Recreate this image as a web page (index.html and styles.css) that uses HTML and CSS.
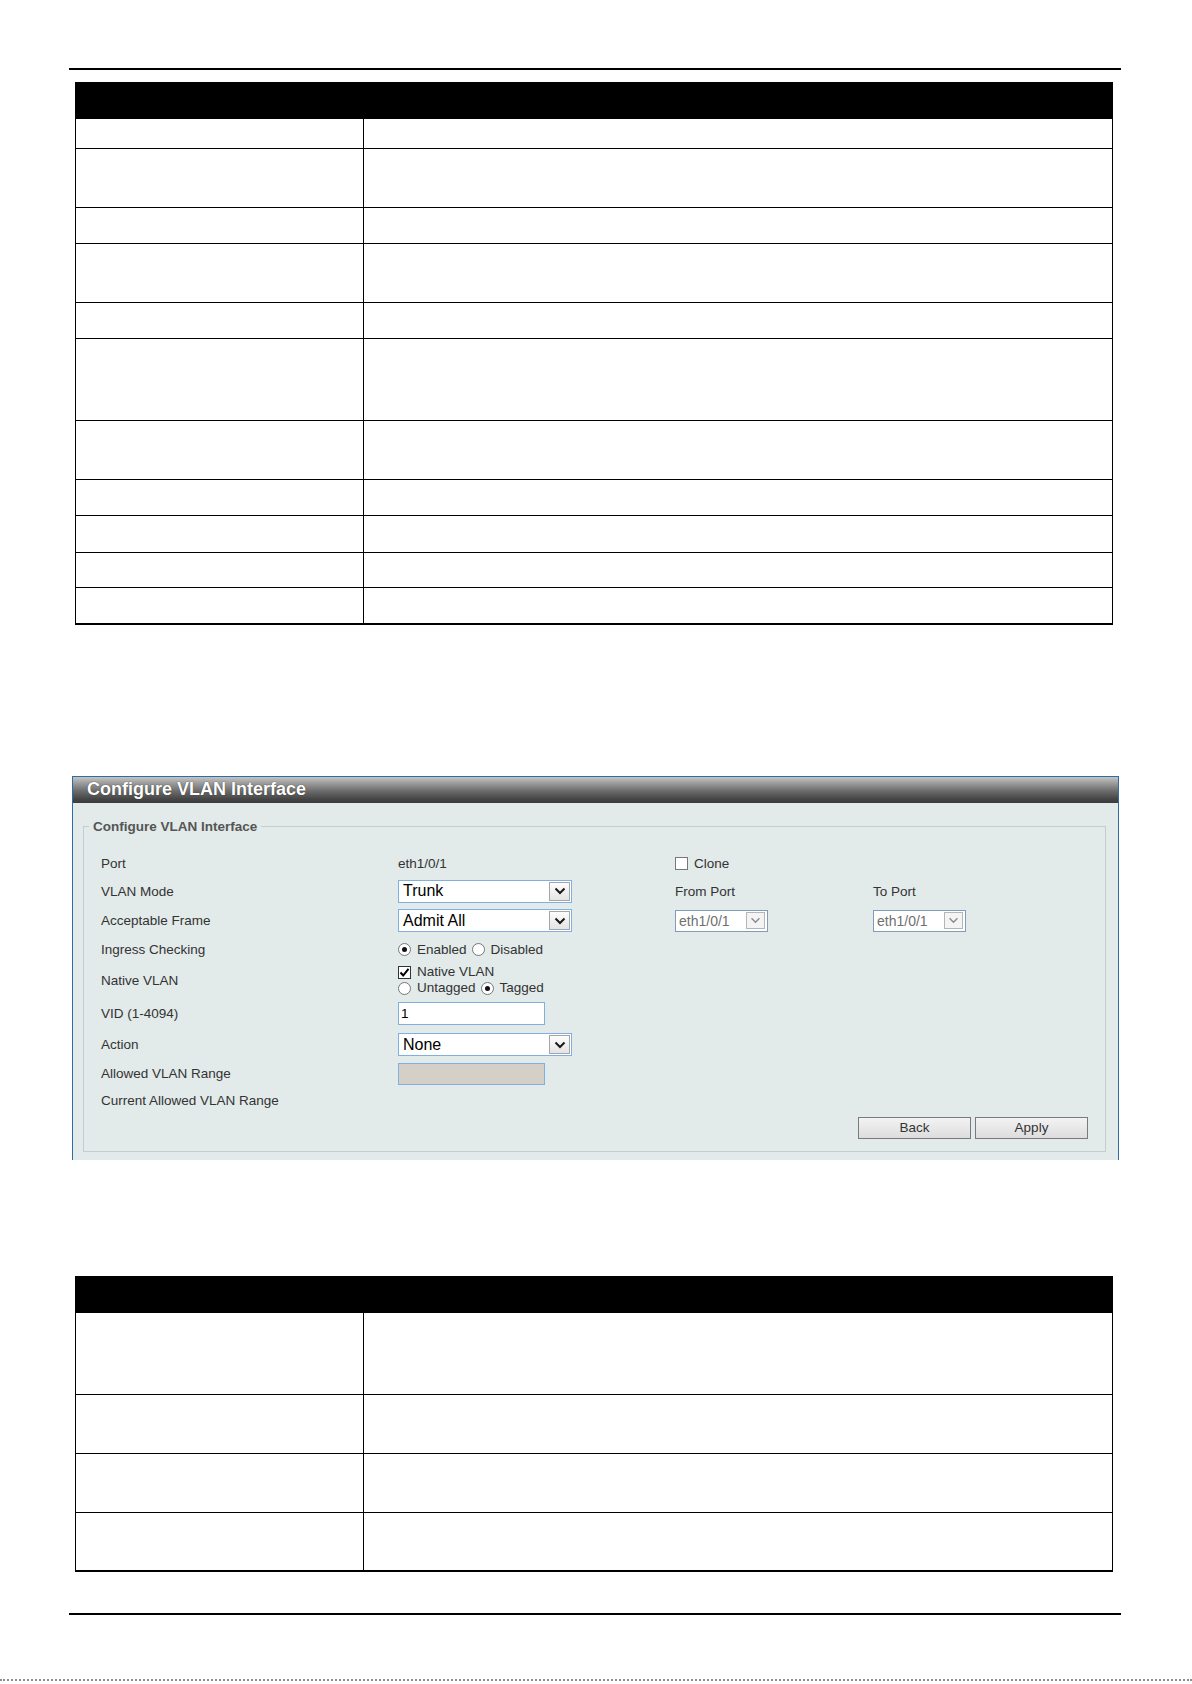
FILE: index.html
```html
<!DOCTYPE html>
<html lang="en">
<head>
  <meta charset="UTF-8">
  <title>Configure VLAN Interface</title>
  <link rel="stylesheet" href="styles.css">
</head>
<body>
  <div class="doc">
    <div class="rule"></div>

    <table class="param-table first">
      <tr class="head"><th></th><th></th></tr>
      <tr class="r-xs"><td></td><td></td></tr>
      <tr class="r-2"><td></td><td></td></tr>
      <tr class="r-1"><td></td><td></td></tr>
      <tr class="r-2"><td></td><td></td></tr>
      <tr class="r-1"><td></td><td></td></tr>
      <tr class="r-3"><td></td><td></td></tr>
      <tr class="r-2"><td></td><td></td></tr>
      <tr class="r-1"><td></td><td></td></tr>
      <tr class="r-1b"><td></td><td></td></tr>
      <tr class="r-1c"><td></td><td></td></tr>
      <tr class="r-1"><td></td><td></td></tr>
    </table>

    <div class="panel">
      <div class="panel-title">Configure VLAN Interface</div>
      <div class="panel-body">
        <fieldset class="group">
          <legend>Configure VLAN Interface</legend>
          <div class="form">

            <div class="form-row h-port">
              <span class="lbl">Port</span>
              <span class="val">eth1/0/1</span>
              <span class="opt"><span class="check"></span>Clone</span>
              <span></span>
            </div>

            <div class="form-row h-mode">
              <span class="lbl">VLAN Mode</span>
              <div class="select">
                <span class="select-text">Trunk</span>
                <span class="select-btn"><svg width="12" height="8" viewBox="0 0 12 8"><path d="M1.5 1.5 L6 6 L10.5 1.5" fill="none" stroke="#1a1a1a" stroke-width="2"/></svg></span>
              </div>
              <span class="lbl">From Port</span>
              <span class="lbl">To Port</span>
            </div>

            <div class="form-row h-frame">
              <span class="lbl">Acceptable Frame</span>
              <div class="select">
                <span class="select-text">Admit All</span>
                <span class="select-btn"><svg width="12" height="8" viewBox="0 0 12 8"><path d="M1.5 1.5 L6 6 L10.5 1.5" fill="none" stroke="#1a1a1a" stroke-width="2"/></svg></span>
              </div>
              <div class="select small disabled">
                <span class="select-text">eth1/0/1</span>
                <span class="select-btn"><svg width="11" height="7" viewBox="0 0 12 8"><path d="M1.5 1.5 L6 6 L10.5 1.5" fill="none" stroke="#8a8a8a" stroke-width="1.6"/></svg></span>
              </div>
              <div class="select small disabled">
                <span class="select-text">eth1/0/1</span>
                <span class="select-btn"><svg width="11" height="7" viewBox="0 0 12 8"><path d="M1.5 1.5 L6 6 L10.5 1.5" fill="none" stroke="#8a8a8a" stroke-width="1.6"/></svg></span>
              </div>
            </div>

            <div class="form-row h-ingress">
              <span class="lbl">Ingress Checking</span>
              <span class="radios">
                <span class="radio on"></span>Enabled
                <span class="radio"></span>Disabled
              </span>
              <span></span>
              <span></span>
            </div>

            <div class="form-row h-native">
              <span class="lbl">Native VLAN</span>
              <div class="stack">
                <span class="opt"><span class="check on"><svg width="11" height="11" viewBox="0 0 11 11"><path d="M1.5 5.5 L4.2 8.5 L9.5 1.8" fill="none" stroke="#000" stroke-width="2"/></svg></span>Native VLAN</span>
                <span class="radios">
                  <span class="radio"></span>Untagged
                  <span class="radio on"></span>Tagged
                </span>
              </div>
              <span></span>
              <span></span>
            </div>

            <div class="form-row h-vid">
              <span class="lbl">VID (1-4094)</span>
              <div class="input">1</div>
              <span></span>
              <span></span>
            </div>

            <div class="form-row h-action">
              <span class="lbl">Action</span>
              <div class="select">
                <span class="select-text">None</span>
                <span class="select-btn"><svg width="12" height="8" viewBox="0 0 12 8"><path d="M1.5 1.5 L6 6 L10.5 1.5" fill="none" stroke="#1a1a1a" stroke-width="2"/></svg></span>
              </div>
              <span></span>
              <span></span>
            </div>

            <div class="form-row h-allowed">
              <span class="lbl">Allowed VLAN Range</span>
              <div class="input off"></div>
              <span></span>
              <span></span>
            </div>

            <div class="form-row h-current">
              <span class="lbl">Current Allowed VLAN Range</span>
              <span></span>
              <span></span>
              <span></span>
            </div>

            <div class="actions">
              <button type="button" class="btn">Back</button>
              <button type="button" class="btn">Apply</button>
            </div>

          </div>
        </fieldset>
      </div>
    </div>

    <table class="param-table second">
      <tr class="head"><th></th><th></th></tr>
      <tr class="r-3"><td></td><td></td></tr>
      <tr class="r-2"><td></td><td></td></tr>
      <tr class="r-2"><td></td><td></td></tr>
      <tr class="r-2"><td></td><td></td></tr>
    </table>

    <div class="rule bottom"></div>
  </div>

  <div class="page-edge"></div>
</body>
</html>
```

FILE: styles.css
```css
body {
  margin: 0;
  background: #fff;
  font-family: "Liberation Sans", Arial, sans-serif;
  color: #333;
}

.doc {
  padding-top: 68px;
  padding-left: 69px;
  width: 1052px;
}

.rule {
  height: 2px;
  background: #000;
}

.rule.bottom {
  margin-top: 41px;
}

/* parameter tables */
.param-table {
  margin-left: 6px;
  width: 1038px;
  border-collapse: collapse;
  border-bottom: 2px solid #000;
}

.param-table.first {
  margin-top: 12px;
}

.param-table.second {
  margin-top: 116px;
}

.param-table th,
.param-table td {
  border: 1px solid #000;
  padding: 0;
}

.param-table th:first-child,
.param-table td:first-child {
  width: 287px;
}

.param-table .head {
  height: 36px;
  background: #000;
}

.r-xs { height: 30px; }
.r-1 { height: 36px; }
.r-1b { height: 37px; }
.r-1c { height: 35px; }
.r-2 { height: 59px; }
.r-3 { height: 82px; }

/* configuration window */
.panel {
  margin-top: 151px;
  margin-left: 3px;
  width: 1045px;
  border: 1px solid #2f6ca3;
  border-bottom: none;
  background: #e2eaea;
}

.panel-title {
  height: 26px;
  line-height: 24px;
  padding-left: 14px;
  font-size: 18px;
  font-weight: bold;
  color: #fff;
  text-shadow: 0 0 1px #222;
  background: linear-gradient(#c4c4c4 0%, #9a9a9a 25%, #6a6a6a 55%, #454545 85%, #3c3c3c 100%);
}

.panel-body {
  padding: 16px 12px 8px 10px;
}

.group {
  margin: 0;
  padding: 0;
  border: 1px solid #c3cfcf;
  min-width: 0;
}

.group legend {
  margin-left: 5px;
  padding: 0 4px;
  font-size: 13.5px;
  line-height: 16px;
  font-weight: bold;
  color: #555;
}

.form {
  padding: 16px 17px 9px 17px;
  font-size: 13.5px;
}

.form-row {
  display: grid;
  grid-template-columns: 297px 277px 198px 1fr;
  align-items: center;
}

.h-port { height: 26px; }
.h-mode { height: 29px; }
.h-frame { height: 30px; }
.h-ingress { height: 28px; }
.h-native { height: 33px; }
.h-vid { height: 33px; }
.h-action { height: 30px; }
.h-allowed { height: 28px; }
.h-current { height: 26px; }

.lbl,
.val {
  color: #333;
  white-space: nowrap;
}

.opt,
.radios {
  display: flex;
  align-items: center;
  color: #333;
  white-space: nowrap;
}

.stack {
  display: flex;
  flex-direction: column;
  line-height: 16px;
}

.check {
  display: inline-flex;
  align-items: center;
  justify-content: center;
  width: 11px;
  height: 11px;
  margin-right: 6px;
  border: 1px solid #777;
  background: #fff;
}

.check.on {
  border-color: #333;
}

.radio {
  position: relative;
  display: inline-block;
  width: 11px;
  height: 11px;
  margin-right: 6px;
  border: 1px solid #777;
  border-radius: 50%;
  background: #fff;
}

.radios .radio:nth-of-type(2) {
  margin-left: 5px;
}

.radio.on::after {
  content: "";
  position: absolute;
  left: 3px;
  top: 3px;
  width: 5px;
  height: 5px;
  border-radius: 50%;
  background: #111;
}

/* drop-down boxes */
.select {
  display: flex;
  align-items: center;
  justify-content: space-between;
  width: 172px;
  height: 21px;
  border: 1px solid #7fb0e0;
  background: #fff;
}

.select-text {
  padding-left: 4px;
  font-size: 16px;
  color: #000;
}

.select-btn {
  display: flex;
  align-items: center;
  justify-content: center;
  width: 19px;
  height: 17px;
  margin-right: 1px;
  border: 1px solid #a5a5a5;
  background: linear-gradient(#fdfdfd, #e4e4e4);
}

.select.small {
  width: 91px;
  height: 20px;
  border-color: #7f9db9;
}

.select.small .select-text {
  padding-left: 3px;
  font-size: 14px;
  color: #707070;
}

.select.small .select-btn {
  width: 17px;
  height: 15px;
  margin-right: 2px;
  border-color: #b5b5b5;
  background: #f4f4f4;
}

.input {
  box-sizing: border-box;
  width: 147px;
  height: 23px;
  padding: 2px 2px 0;
  border: 1px solid #7fb0e0;
  background: #fff;
  font-size: 13.5px;
  line-height: 18px;
  color: #000;
}

.input.off {
  height: 22px;
  background: #d4d0c8;
}

.actions {
  display: flex;
  justify-content: flex-end;
  align-items: center;
  gap: 4px;
  height: 28px;
}

.btn {
  width: 113px;
  height: 22px;
  padding: 0;
  border: 1px solid #7a7a7a;
  background: linear-gradient(#f3f3f3, #dddddd);
  font-family: "Liberation Sans", Arial, sans-serif;
  font-size: 13.5px;
  color: #333;
}

/* torn edge at the bottom of the page */
.page-edge {
  margin-top: 64px;
  width: 1192px;
  height: 0;
  border-top: 2px dotted #8a8f96;
}
```
